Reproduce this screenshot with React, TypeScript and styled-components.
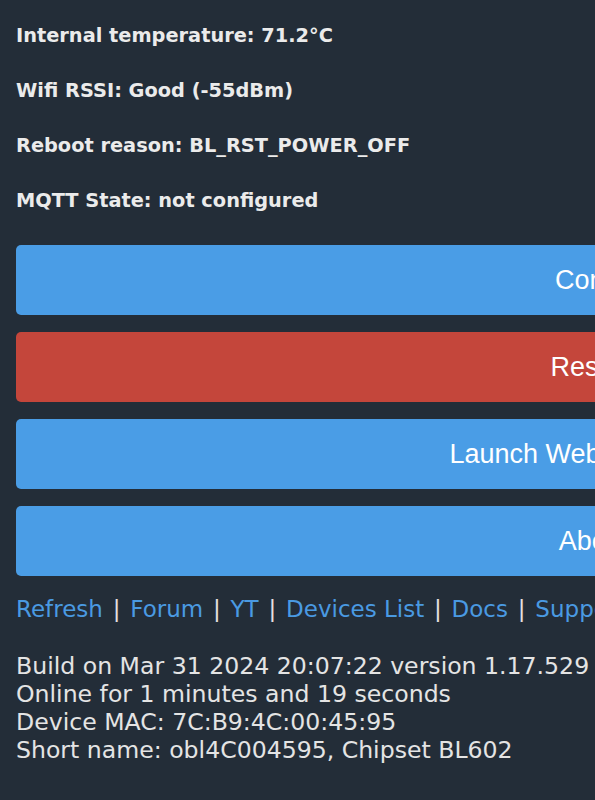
import styled, { createGlobalStyle } from "styled-components";

const GlobalStyle = createGlobalStyle`
  html, body {
    margin: 0;
    padding: 0;
    background-color: #232d38;
  }
  body {
    font-family: "DejaVu Sans", Verdana, sans-serif;
    color: #e8e8e8;
  }
`;

const statusLines = [
  "Internal temperature: 71.2°C",
  "Wifi RSSI: Good (-55dBm)",
  "Reboot reason: BL_RST_POWER_OFF",
  "MQTT State: not configured",
];

const buttons: { label: string; danger?: boolean }[] = [
  { label: "Config" },
  { label: "Restart", danger: true },
  { label: "Launch Web Application" },
  { label: "About" },
];

const links = ["Refresh", "Forum", "YT", "Devices List", "Docs", "Support", "GitHub"];

const infoLines = [
  "Build on Mar 31 2024 20:07:22 version 1.17.529",
  "Online for 1 minutes and 19 seconds",
  "Device MAC: 7C:B9:4C:00:45:95",
  "Short name: obl4C004595, Chipset BL602",
];

function App() {
  return (
    <>
      <GlobalStyle />
      <Page>
        <StatusList>
          {statusLines.map((line) => (
            <StatusLine key={line}>{line}</StatusLine>
          ))}
        </StatusList>
        <ButtonList>
          {buttons.map((b) => (
            <Button key={b.label} $danger={b.danger}>
              {b.label}
            </Button>
          ))}
        </ButtonList>
        <LinkRow>
          {links.map((l, i) => (
            <span key={l}>
              {i > 0 && <Sep> | </Sep>}
              <Link href="#">{l}</Link>
            </span>
          ))}
        </LinkRow>
        <Info>
          {infoLines.map((line) => (
            <div key={line}>{line}</div>
          ))}
        </Info>
      </Page>
    </>
  );
}

export default App;

const Page = styled.div`
  width: 1156px;
  padding: 25px 16px 40px;
`;

const StatusList = styled.div`
  display: flex;
  flex-direction: column;
  gap: 33px;
`;

const StatusLine = styled.div`
  font-size: 19.35px;
  line-height: 22px;
  font-weight: bold;
  color: #ebebeb;
  white-space: nowrap;
`;

const ButtonList = styled.div`
  margin-top: 33px;
  display: flex;
  flex-direction: column;
  gap: 17px;
`;

const Button = styled.button<{ $danger?: boolean }>`
  width: 100%;
  height: 70px;
  border: none;
  border-radius: 5px;
  background-color: ${({ $danger }) => ($danger ? "#c4463b" : "#4a9de6")};
  color: #ffffff;
  font-family: "Liberation Sans", Arial, sans-serif;
  font-size: 27px;
  text-align: center;
  cursor: pointer;
`;

const LinkRow = styled.div`
  margin-top: 19px;
  font-size: 23px;
  line-height: 28px;
  white-space: nowrap;
`;

const Link = styled.a`
  color: #4a9ae2;
  text-decoration: none;
`;

const Sep = styled.span`
  margin: 0 2.5px;
  color: #e6e0e0;
`;

const Info = styled.div`
  margin-top: 29px;
  font-size: 23.6px;
  line-height: 28px;
  color: #e4e4e4;
  white-space: nowrap;
`;
